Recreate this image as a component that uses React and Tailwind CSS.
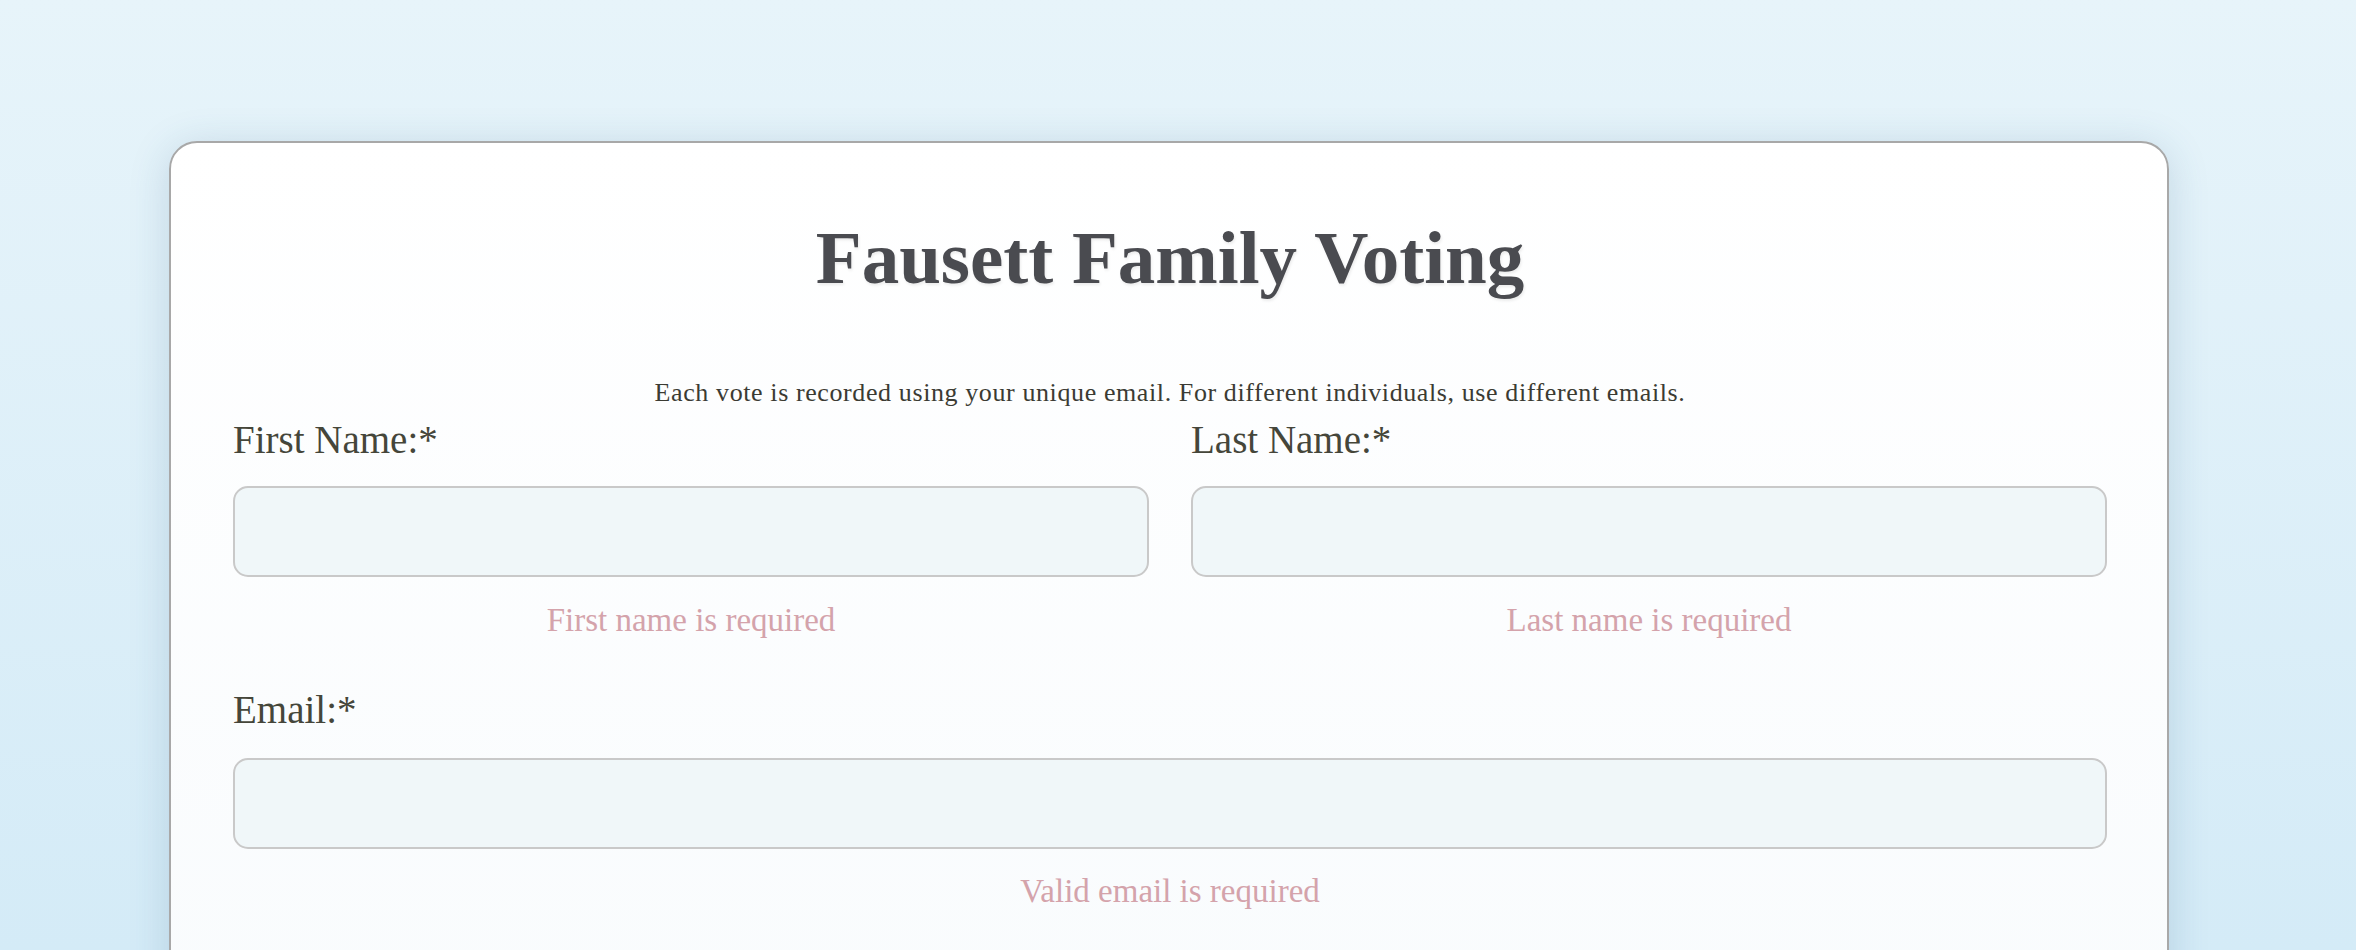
import React from 'react';

function Field({ label, error }) {
    return (
        <div className="flex flex-col">
            <label className="text-[39px] leading-[39px] text-[#45463a]">{label}</label>
            <input type="text" className="mt-[27px] h-[91px] w-full rounded-[15px] border-2 border-[#c9c9c9] bg-[#f0f7f9] outline-none" />
            <p className="mt-[27px] text-center text-[33px] leading-[33px] text-[#d4a3ab]">{error}</p>
        </div>
    );
}

export default function App() {
    return (
        <div className="h-screen overflow-hidden bg-gradient-to-b from-[#e7f4fa] to-[#d4ebf7] pt-[141px] pl-[169px] font-['Liberation_Serif',serif]">
            <div className="w-[2000px] rounded-[28px] border-2 border-[#a8a8a8] bg-gradient-to-b from-white to-[#f8fbfd] pt-[77px] pl-[62px] pr-[60px] pb-[200px] shadow-[0_6px_40px_rgba(40,90,130,0.18)]">
                <h1 className="text-center text-[75px] leading-[75px] font-bold text-[#4a4b50] [text-shadow:1px_2px_3px_rgba(0,0,0,0.08)]">
                    Fausett Family Voting
                </h1>
                <p className="mt-[85px] text-center text-[26px] leading-[26px] tracking-[0.6px] text-[#3b3b33]">
                    Each vote is recorded using your unique email. For different individuals, use different emails.
                </p>
                <div className="mt-[14px] grid grid-cols-2 gap-x-[42px]">
                    <Field label="First Name:*" error="First name is required" />
                    <Field label="Last Name:*" error="Last name is required" />
                </div>
                <div className="mt-[53px] flex flex-col">
                    <label className="text-[39px] leading-[39px] text-[#45463a]">Email:*</label>
                    <input type="email" className="mt-[29px] h-[91px] w-full rounded-[15px] border-2 border-[#c9c9c9] bg-[#f0f7f9] outline-none" />
                    <p className="mt-[26px] text-center text-[33px] leading-[33px] text-[#d4a3ab]">Valid email is required</p>
                </div>
            </div>
        </div>
    );
}
